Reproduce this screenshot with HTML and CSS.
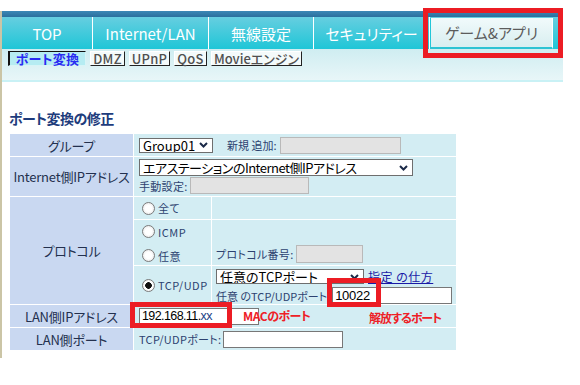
FILE: index.html
```html
<!DOCTYPE html>
<html lang="ja">
<head>
    <meta charset="UTF-8">
    <meta name="viewport" content="width=device-width, initial-scale=1.0">
    <title>ポート変換の修正</title>
    <link rel="stylesheet" href="styles.css">
</head>
<body>
    <div class="page">
        <div class="topbar"></div>
        <ul class="tabs">
            <li class="tab tab-top">TOP</li>
            <li class="tab tab-lan">Internet/LAN</li>
            <li class="tab tab-wl">無線設定</li>
            <li class="tab tab-sec">セキュリティー</li>
            <li class="tab tab-app active">ゲーム&amp;アプリ</li>
            <li class="tab tab-end"></li>
        </ul>

        <div class="subnav">
            <a class="sub active">ポート変換</a>
            <a class="sub sub-dmz">DMZ</a>
            <a class="sub sub-upnp">UPnP</a>
            <a class="sub sub-qos">QoS</a>
            <a class="sub sub-movie">Movieエンジン</a>
        </div>

        <div class="content">
            <h2>ポート変換の修正</h2>

            <table class="form">
                <tr class="row-group">
                    <th>グループ</th>
                    <td>
                        <div class="line">
                            <span class="sel sel-group">
                                <select><option>Group01</option></select>
                                <svg viewBox="0 0 9 6"><path d="M1 1 L4.5 4.5 L8 1" /></svg>
                            </span>
                            <span class="note note-new">新規 追加:</span>
                            <input class="txt off w-new" type="text">
                        </div>
                    </td>
                </tr>

                <tr class="row-inet">
                    <th>Internet側IPアドレス</th>
                    <td class="inet-cell">
                        <span class="sel sel-inet">
                            <select><option>エアステーションのInternet側IPアドレス</option></select>
                            <svg viewBox="0 0 9 6"><path d="M1 1 L4.5 4.5 L8 1" /></svg>
                        </span>
                        <div class="line">
                            <span class="note">手動設定:</span>
                            <input class="txt off w-manual" type="text">
                        </div>
                    </td>
                </tr>

                <tr class="row-proto">
                    <th>プロトコル</th>
                    <td class="proto-cell">
                        <div class="proto">
                            <div class="p-opt">
                                <label class="radio"><input type="radio" name="proto">全て</label>
                            </div>
                            <div class="p-val"></div>

                            <div class="p-opt p-two">
                                <label class="radio"><input type="radio" name="proto">ICMP</label>
                                <label class="radio"><input type="radio" name="proto">任意</label>
                            </div>
                            <div class="p-val p-num">
                                <span class="note">プロトコル番号:</span>
                                <input class="txt off w-num" type="text">
                            </div>

                            <div class="p-opt">
                                <label class="radio"><input type="radio" name="proto" checked>TCP/UDP</label>
                            </div>
                            <div class="p-val p-tcp">
                                <div class="line">
                                    <span class="sel sel-tcp">
                                        <select><option>任意のTCPポート</option></select>
                                        <svg viewBox="0 0 9 6"><path d="M1 1 L4.5 4.5 L8 1" /></svg>
                                    </span>
                                    <a class="how" href="#">指定 の仕方</a>
                                </div>
                                <div class="line">
                                    <span class="note note-port">任意 のTCP/UDPポート:</span>
                                    <input class="txt w-port" type="text" value="10022">
                                </div>
                            </div>
                        </div>
                    </td>
                </tr>

                <tr class="row-lanip">
                    <th>LAN側IPアドレス</th>
                    <td>
                        <div class="txt w-lanip">192.168.11.<span class="xx">xx</span></div>
                    </td>
                </tr>

                <tr class="row-lanport">
                    <th>LAN側ポート</th>
                    <td>
                        <div class="line">
                            <span class="note">TCP/UDPポート:</span>
                            <input class="txt w-lanport" type="text">
                        </div>
                    </td>
                </tr>
            </table>
        </div>
    </div>

    <!-- red marks drawn over the screenshot -->
    <div class="mark mark-tab"></div>
    <div class="mark mark-port"></div>
    <div class="mark mark-ip"></div>
    <div class="ann ann-mac">MACのポート</div>
    <div class="ann ann-open">解放するポート</div>
</body>
</html>
```

FILE: styles.css
```css
*{
    padding: 0;
    margin: 0;
    box-sizing: border-box;
}

body{
    font-family: "Noto Sans CJK JP", "Noto Sans", sans-serif;
    font-feature-settings: "palt";
    color: #23304e;
    background: #fff;
}

.page {
    margin-top: 11px;
    width: 563px;
    height: 347px;
    border-left: 2px solid #cbc5a6;
}

.topbar {
    height: 6px;
    background: linear-gradient(#3b88b6, #2b6f9d);
}

/* main tabs */
.tabs {
    display: flex;
    list-style: none;
    height: 32px;
    background: linear-gradient(#66cee0, #1fc6d7);
}

.tab {
    display: flex;
    align-items: center;
    justify-content: center;
    color: #fff;
    font-size: 15px;
    border-right: 1px solid #fff;
}

.tab-top { width: 91px; }
.tab-lan { width: 116px; }
.tab-wl { width: 105px; }
.tab-sec { width: 116px; }
.tab-app { width: 123px; }
.tab-end { flex: 1; border-right: none; }

.tab.active {
    color: #5c5c5c;
    background: linear-gradient(#f1fafb, #d8eef0);
    border-left: 1px solid #22c6d8;
    border-bottom: 2px solid #2cc3d3;
    margin-top: 1px;
}

/* sub tabs */
.subnav {
    height: 33px;
    display: flex;
    align-items: flex-start;
    gap: 4px;
    padding: 2px 0 0 6px;
    background: linear-gradient(#cfedf1, #e8f6f8);
    border-bottom: 2px solid #c9f1f5;
}

.sub {
    height: 15px;
    font-size: 13px;
    line-height: 13px;
    text-align: center;
    color: #505050;
    font-weight: 500;
    background: #f4fafa;
    border: 1px solid;
    border-color: #fff #222 #222 #fff;
    letter-spacing: 0.3px;
}

.sub.active {
    width: 78px;
    font-weight: bold;
    color: #2a2cf2;
    background: #b6ecf2;
    border-color: #111 #d8f4f6 #d8f4f6 #111;
    border-left-width: 2px;
}

.sub-dmz { width: 35px; }
.sub-upnp { width: 41px; }
.sub-qos { width: 33px; }
.sub-movie { width: 91px; letter-spacing: 0; }

/* form */
.content {
    padding: 28px 0 0 7px;
}

.content h2 {
    font-size: 14px;
    line-height: 16px;
    color: #1e3c7c;
    letter-spacing: -0.5px;
    margin-bottom: 7px;
}

.form {
    border-spacing: 1px;
    font-size: 13px;
}

.form th {
    width: 123px;
    background: #c9d8f1;
    font-weight: normal;
    text-align: center;
    color: #23304e;
    padding: 0;
    letter-spacing: -0.2px;
}

.form td {
    width: 322px;
    background: #d3edf3;
    padding: 0 0 0 5px;
}

.row-group { height: 22px; }
.row-inet { height: 39px; }
.row-proto { height: 107px; }
.row-lanip { height: 22px; }
.row-lanport { height: 22px; }

.line {
    display: flex;
    align-items: center;
}

.note {
    font-size: 11px;
    color: #2d4270;
    letter-spacing: 0.3px;
    white-space: nowrap;
    flex-shrink: 0;
}

.note-new {
    margin: 0 3px 0 14px;
    letter-spacing: 0;
}

.note-port {
    letter-spacing: 0;
}

.txt {
    height: 17px;
    border: 1px solid #777;
    background: #fff;
    font-family: "Liberation Sans", sans-serif;
    font-size: 13px;
    padding: 0 2px;
    outline: none;
    flex-shrink: 0;
}

.txt.off {
    background: #e3e3e3;
    border-color: #b9b9b9;
}

.w-new { width: 121px; }
.w-manual { width: 119px; margin-left: 2px; }
.w-num { width: 67px; height: 18px; margin-left: 2px; }
.w-port { width: 120px; margin-left: 2px; letter-spacing: -0.3px; }
.w-lanport { width: 120px; margin-left: 2px; }
.w-lanip {
    width: 120px;
    font-size: 12.5px;
    line-height: 15px;
    letter-spacing: -0.6px;
    color: #000;
}
.w-lanip .xx { color: #1c3f86; }

/* select boxes */
.sel {
    display: inline-flex;
    align-items: center;
    height: 15px;
    border: 1px solid #6e6e6e;
    background: #fff;
    flex-shrink: 0;
}

.sel select {
    appearance: none;
    -webkit-appearance: none;
    flex: 1;
    min-width: 0;
    border: none;
    outline: none;
    background: transparent;
    font-family: "Noto Sans CJK JP", sans-serif;
    font-feature-settings: "palt";
    font-size: 13px;
    line-height: 13px;
    height: 13px;
    padding: 0 0 0 3px;
    color: #000;
}

.sel svg {
    width: 9px;
    height: 6px;
    margin-right: 4px;
    fill: none;
    stroke: #1b2a48;
    stroke-width: 2;
}

.sel-group { width: 74px; }
.sel-inet { width: 274px; height: 17px; margin-top: 2px; }
.sel-inet select { letter-spacing: -0.5px; }
.sel-tcp { width: 148px; }

.inet-cell {
    vertical-align: top;
}

/* protocol block */
.form td.proto-cell {
    padding: 0;
}

.proto {
    display: grid;
    grid-template-columns: 77px 1fr;
    grid-template-rows: 22px 45px 38px;
    gap: 1px;
    background: #fff;
}

.p-opt, .p-val {
    background: #d3edf3;
}

.p-opt {
    display: flex;
    align-items: center;
    padding-left: 8px;
}

.p-two {
    flex-direction: column;
    align-items: flex-start;
    justify-content: flex-start;
    gap: 11px;
    padding-top: 5px;
}

.radio {
    display: flex;
    align-items: center;
    font-size: 11px;
    color: #2d4270;
    letter-spacing: 0.5px;
    height: 13px;
}

.radio input {
    appearance: none;
    -webkit-appearance: none;
    width: 13px;
    height: 13px;
    margin-right: 3px;
    border: 1px solid #7b7b7b;
    border-radius: 50%;
    background: radial-gradient(circle, #fff 40%, #dedede 100%);
}

.radio input:checked {
    background: radial-gradient(circle, #111 0 3px, #fff 3.6px, #fff 55%, #dcdcdc 100%);
}

.p-val {
    padding-left: 4px;
}

.p-num {
    display: flex;
    align-items: flex-end;
    padding-bottom: 2px;
}

.p-num .note {
    padding-bottom: 1px;
}

.p-tcp {
    padding-top: 2px;
}

.p-tcp .line + .line {
    margin-top: 2px;
}

.how {
    font-size: 12px;
    color: #1a1aa6;
    margin-left: 4px;
    letter-spacing: 0.5px;
    white-space: nowrap;
}

/* annotation marks */
.mark {
    position: absolute;
    border: 5px solid #ec1c24;
}

.mark-tab { left: 423px; top: 8px; width: 140px; height: 50px; }
.mark-port { left: 327px; top: 278px; width: 54px; height: 29px; }
.mark-ip { left: 130px; top: 302px; width: 102px; height: 26px; }

.ann {
    position: absolute;
    color: #ee2026;
    font-size: 12px;
    line-height: 16px;
    font-weight: bold;
    white-space: nowrap;
}

.ann-mac { left: 243px; top: 308px; letter-spacing: -0.5px; }
.ann-open { left: 369px; top: 310px; letter-spacing: -1px; }
```
